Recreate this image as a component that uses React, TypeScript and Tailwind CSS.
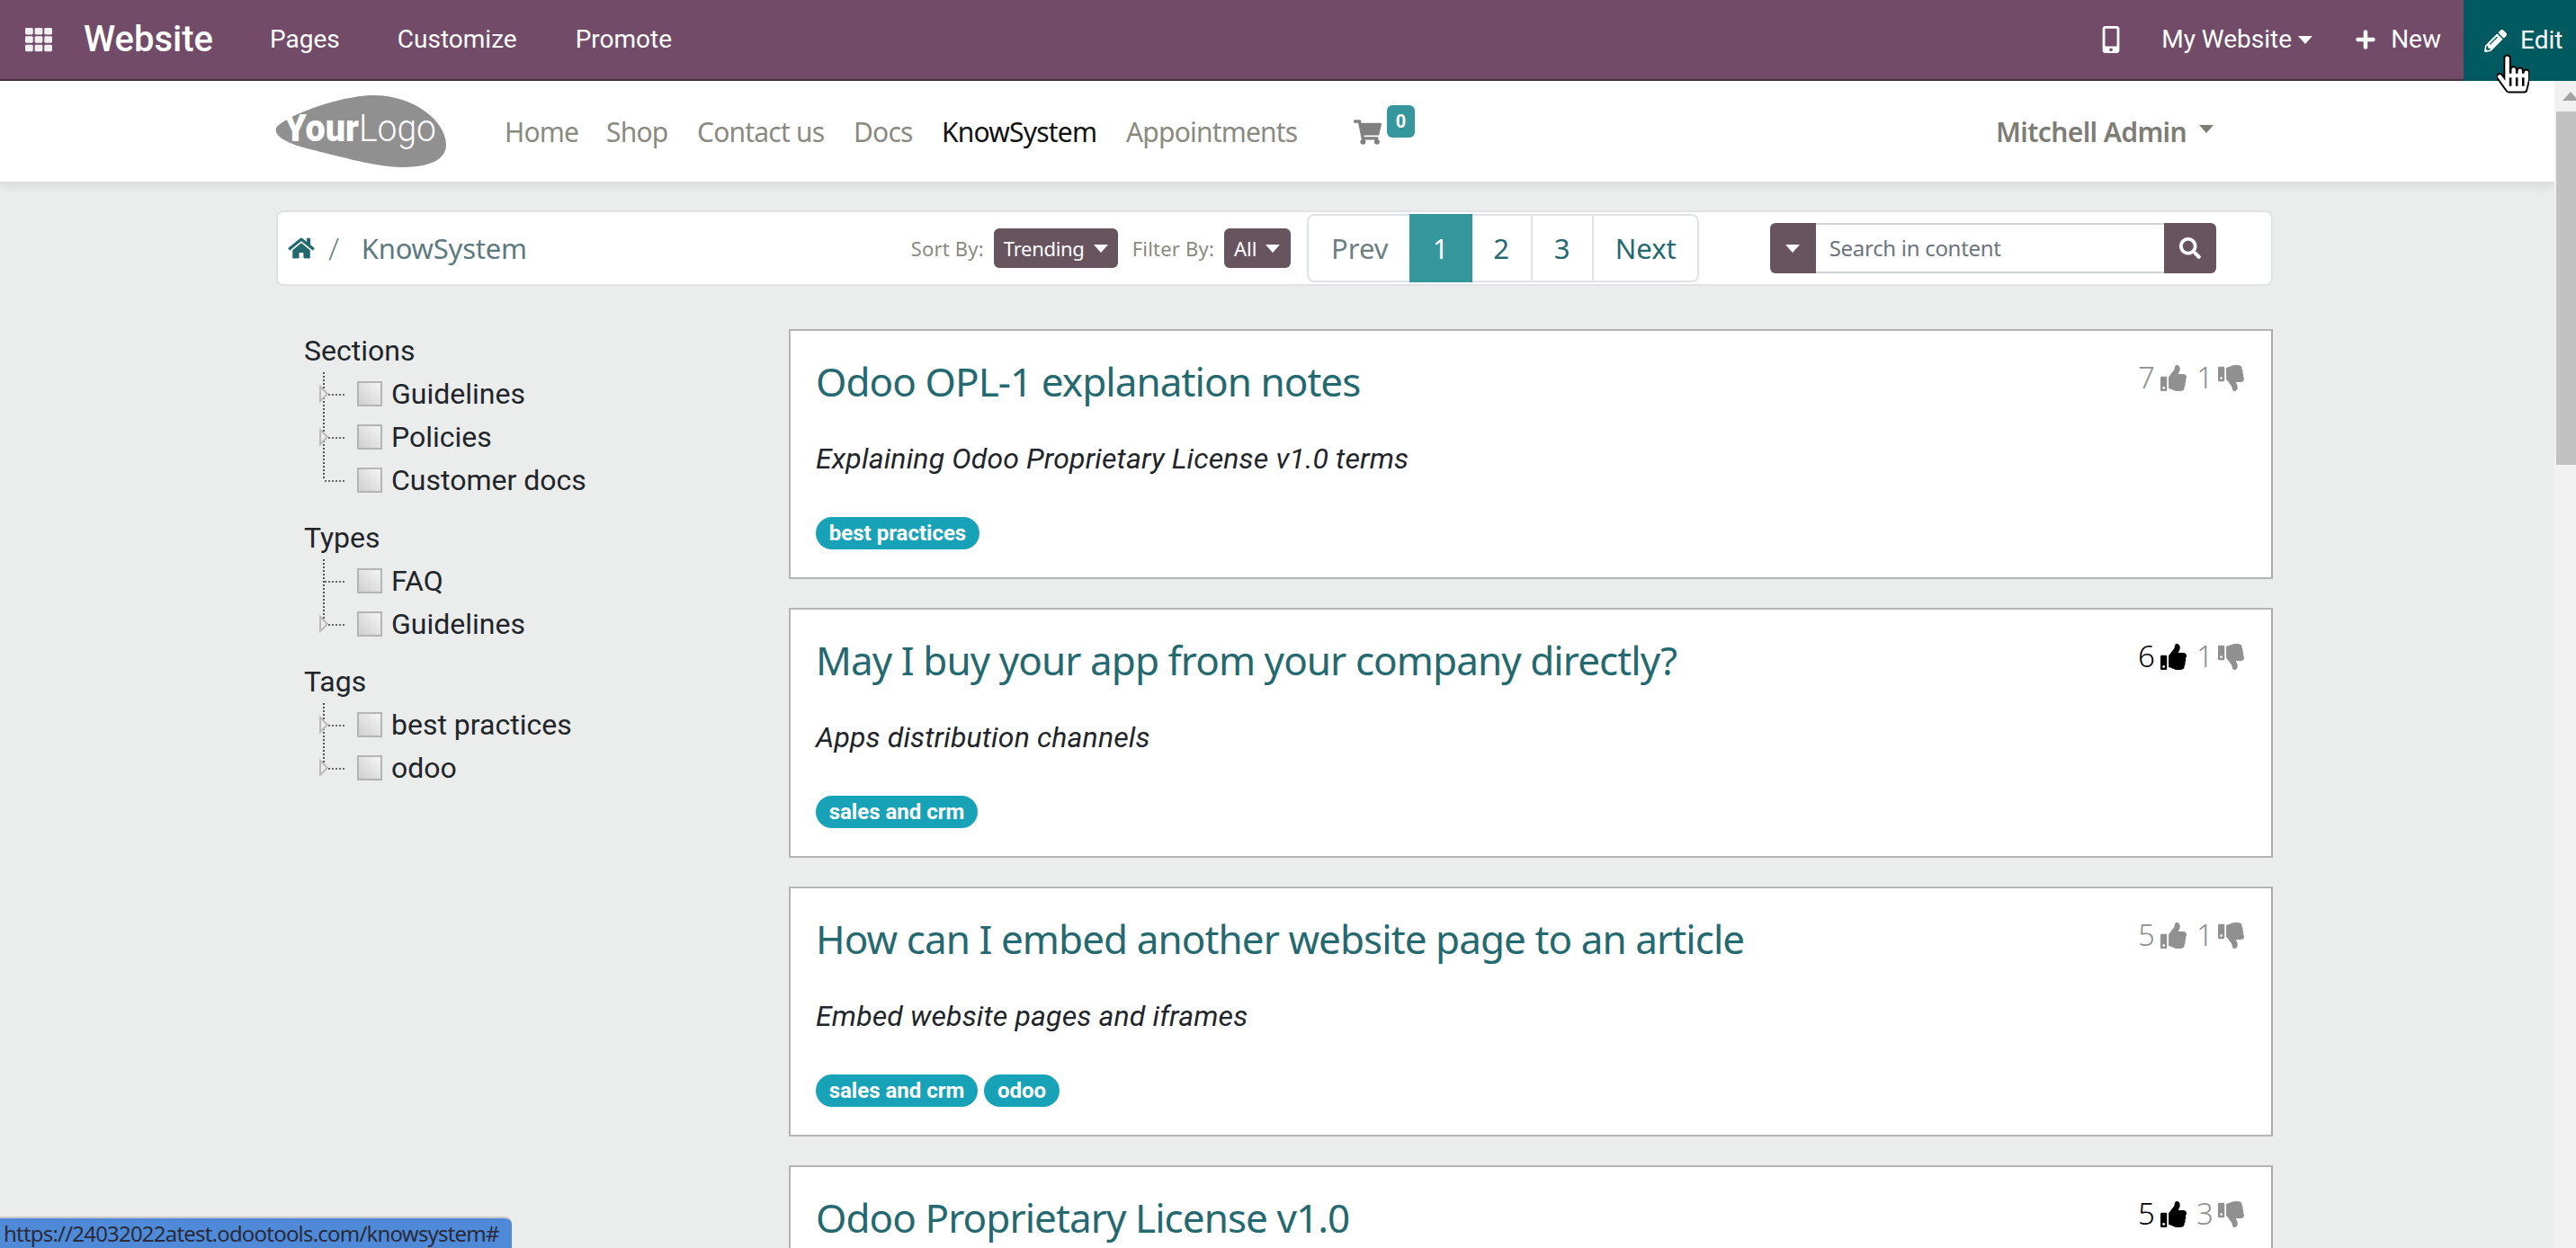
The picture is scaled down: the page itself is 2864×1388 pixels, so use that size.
import { FaTh, FaHome, FaMobileAlt, FaPlus, FaPencilAlt, FaShoppingCart, FaSearch, FaThumbsUp, FaThumbsDown, FaHandPointer } from "react-icons/fa";

const SOURCE = "[font-family:'Noto_Sans',sans-serif]";

type Vote = { up: number; down: number; voted?: boolean };
type Article = { title: string; desc?: string; tags: { label: string; w: string }[]; votes: Vote };

const ARTICLES: Article[] = [
  {
    title: "Odoo OPL-1 explanation notes",
    desc: "Explaining Odoo Proprietary License v1.0 terms",
    tags: [{ label: "best practices", w: "w-[182px]" }],
    votes: { up: 7, down: 1 },
  },
  {
    title: "May I buy your app from your company directly?",
    desc: "Apps distribution channels",
    tags: [{ label: "sales and crm", w: "w-[180px]" }],
    votes: { up: 6, down: 1, voted: true },
  },
  {
    title: "How can I embed another website page to an article",
    desc: "Embed website pages and iframes",
    tags: [
      { label: "sales and crm", w: "w-[180px]" },
      { label: "odoo", w: "w-[84px]" },
    ],
    votes: { up: 5, down: 1 },
  },
  {
    title: "Odoo Proprietary License v1.0",
    tags: [],
    votes: { up: 5, down: 3, voted: true },
  },
];

const TREE = [
  { name: "Sections", items: [["Guidelines", true], ["Policies", true], ["Customer docs", false]] },
  { name: "Types", items: [["FAQ", false], ["Guidelines", true]] },
  { name: "Tags", items: [["best practices", true], ["odoo", true]] },
] as const;

function Caret({ className = "" }: { className?: string }) {
  return <span className={`inline-block border-x-[8px] border-t-[9px] border-x-transparent border-t-current ${className}`} />;
}

function TreeRow({ label, arrow, last }: { label: string; arrow: boolean; last: boolean }) {
  return (
    <div className="flex items-center h-[48px]">
      <svg width="48" height="48" className="ml-[7px] shrink-0">
        <line x1="15" y1="0" x2="15" y2={last ? 24 : 48} stroke="#555" strokeWidth="2" strokeDasharray="2 2" />
        <line x1="16" y1="25" x2="40" y2="25" stroke="#666" strokeWidth="2" strokeDasharray="2 2" />
        {arrow && <path d="M11 16 L19 24 L11 32 Z" fill="#ebecec" stroke="#bbb" strokeWidth="2" />}
      </svg>
      <span className="w-[28px] h-[28px] ml-[4px] shrink-0 border-2 border-[#b4b4b4] bg-gradient-to-tr from-[#cfcfcf] to-[#f4f4f4]" />
      <span className="ml-[10px] text-[32px] leading-none text-[#212529]">{label}</span>
    </div>
  );
}

function Votes({ votes }: { votes: Vote }) {
  const up = votes.voted ? "text-black" : "text-[#909090]";
  return (
    <div className={`flex items-center h-[40px] mt-[8px] ${SOURCE} text-[33px] font-light text-[#909090]`}>
      <span className={`w-[16px] ${up}`}>{votes.up}</span>
      <FaThumbsUp className={`w-[29px] h-[29px] ml-[9px] ${up}`} />
      <span className="w-[12px] ml-[11px]">{votes.down}</span>
      <FaThumbsDown className="w-[29px] h-[29px] ml-[12px]" />
    </div>
  );
}

function ArticleCard({ article }: { article: Article }) {
  return (
    <div className="relative h-[278px] shrink-0 bg-white border-2 border-[#b4b4b4] border-r-[#aaa] pl-[28px] pr-[30px] pt-[24px]">
      <div className="flex items-start justify-between h-[64px]">
        <h3 className={`${SOURCE} text-[44px] leading-[64px] tracking-[-0.92px] font-normal text-[#24696f]`}>{article.title}</h3>
        <Votes votes={article.votes} />
      </div>
      {article.desc && (
        <p className="mt-[34px] h-[40px] text-[32px] leading-[40px] tracking-[0.15px] italic text-[#212529] [font-family:Roboto,sans-serif]">{article.desc}</p>
      )}
      <div className="flex gap-[7px] mt-[45px]">
        {article.tags.map((t) => (
          <span key={t.label} className={`${t.w} h-[36px] flex items-center justify-center rounded-full bg-[#17a2b8] text-white text-[24px] font-bold leading-none`}>
            {t.label}
          </span>
        ))}
      </div>
    </div>
  );
}

export default function App() {
  return (
    <div className="relative w-[2864px] h-[1388px] overflow-hidden bg-[#ebecec] [font-family:Roboto,sans-serif]">
      {/* Website top bar */}
      <div className="flex items-center h-[90px] bg-[#714b67] border-b-2 border-[#4a3144] text-white">
        <FaTh className="w-[34px] h-[30px] ml-[26px] text-[#f3eef1]" />
        <span className="ml-[33px] text-[40px] font-medium">Website</span>
        <span className="ml-[63px] text-[28px] leading-none">Pages</span>
        <span className="ml-[64px] text-[28px] leading-none">Customize</span>
        <span className="ml-[65px] text-[28px] leading-none">Promote</span>
        <FaMobileAlt className="w-[24px] h-[30px] ml-auto mr-[-4px]" />
        <span className="ml-[48px] mr-[-1px] text-[28px] leading-none">My Website</span>
        <Caret className="ml-[8px]" />
        <FaPlus className="w-[24px] h-[24px] ml-[47px] mr-[-1px]" />
        <span className="ml-[17px] text-[28px] leading-none">New</span>
        <div className="flex items-center h-[90px] ml-[25px] w-[125px] bg-[#005a5f] -mb-[2px]">
          <FaPencilAlt className="w-[25px] h-[25px] ml-[23px]" />
          <span className="ml-[15px] text-[28px] leading-none">Edit</span>
        </div>
      </div>

      <div className="flex h-[1298px]">
        <div className="w-[2840px] shrink-0">
          {/* Site header */}
          <header className="flex items-center h-[112px] pl-[307px] bg-white shadow-[0_4px_12px_rgba(0,0,0,0.1)]">
            <svg width="190" height="80" viewBox="0 0 190 80" className="shrink-0 overflow-visible">
              <path d="M0 37 C 5 25 70 0 108 0 C 155 0 189 30 189 55 C 189 72 170 80 139 80 C 110 80 60 65 30 58 C 10 52 -2 45 0 37 Z" fill="#909090" />
              <text x="9" y="51" fill="#fff" fontFamily="Roboto" fontWeight="900" fontSize="42" textLength="83" lengthAdjust="spacingAndGlyphs">Your</text>
              <text x="92" y="51" fill="#fff" fontFamily="Roboto" fontWeight="300" fontSize="42" textLength="86" lengthAdjust="spacingAndGlyphs">Logo</text>
            </svg>
            <nav className={`flex items-center ml-[64px] ${SOURCE} text-[30px] tracking-[-0.8px] text-[#8a8a80]`}>
              <span className="w-[113px]">Home</span>
              <span className="w-[101px]">Shop</span>
              <span className="w-[174px]">Contact us</span>
              <span className="w-[98px]">Docs</span>
              <span className="w-[205px] text-[#111]">KnowSystem</span>
              <span className="w-[253px]">Appointments</span>
            </nav>
            <FaShoppingCart className="w-[31px] h-[28px] text-[#808080] mt-[2px]" />
            <span className="ml-[6px] -mt-[22px] w-[31px] h-[36px] rounded-[6px] bg-[#35979c] text-white text-[20px] font-bold flex items-center justify-center">0</span>
            <span className={`ml-[646px] ${SOURCE} text-[30px] font-semibold tracking-[-0.6px] text-[#7d7d75]`}>Mitchell Admin</span>
            <Caret className="ml-[14px] text-[#7d7d75] -mt-[6px]" />
          </header>

          <div className="pl-[307px] pr-[313px]">
            {/* Toolbar */}
            <div className="flex items-center h-[84px] mt-[32px] bg-white border-2 border-[#e0e3e5] rounded-[8px] pl-[11px]">
              <FaHome className="w-[30px] h-[26px] text-[#24696f] shrink-0" />
              <span className="ml-[15px] text-[32px] font-light text-[#5c7a80]">/</span>
              <span className={`ml-[24px] w-[611px] ${SOURCE} text-[31px] tracking-[-0.2px] text-[#5c7a80]`}>KnowSystem</span>
              <span className={`w-[92px] ${SOURCE} text-[22px] tracking-[0.2px] text-[#8a8a80]`}>Sort By:</span>
              <span className={`flex items-center justify-center gap-[10px] w-[138px] h-[44px] rounded-[6px] bg-[#68545f] text-white ${SOURCE} text-[22px] tracking-[-0.3px]`}>
                Trending <Caret className="border-x-[6px] border-t-[7px]" />
              </span>
              <span className={`ml-[16px] w-[102px] ${SOURCE} text-[22px] tracking-[0.2px] text-[#8a8a80]`}>Filter By:</span>
              <span className={`flex items-center justify-center gap-[10px] w-[74px] h-[44px] rounded-[6px] bg-[#68545f] text-white ${SOURCE} text-[22px]`}>
                All <Caret className="border-x-[6px] border-t-[7px]" />
              </span>
              <div className={`flex ml-[18px] h-[76px] border-2 border-[#e0e3e5] rounded-[8px] ${SOURCE} text-[31px] text-[#24696f] -my-[2px]`}>
                <span className="w-[112px] flex items-center justify-center pl-[2px] text-[#6d7f83]">Prev</span>
                <span className="w-[70px] -my-[2px] flex items-center justify-center bg-[#35979c] text-white">1</span>
                <span className="w-[67px] flex items-center justify-center border-r-2 border-[#e0e3e5]">2</span>
                <span className="w-[68px] flex items-center justify-center border-r-2 border-[#e0e3e5]">3</span>
                <span className="w-[115px] flex items-center justify-center pl-[1px]">Next</span>
              </div>
              <div className="flex ml-[79px] h-[56px] w-[496px]">
                <span className="w-[51px] flex items-center justify-center rounded-l-[6px] bg-[#68545f] text-white">
                  <Caret className="border-x-[7px] border-t-[8px]" />
                </span>
                <span className={`flex-1 flex items-center pl-[15px] border-y-2 border-[#ced4da] bg-white ${SOURCE} text-[24px] tracking-[-0.3px] text-[#6c757d]`}>Search in content</span>
                <span className="w-[58px] flex items-center justify-center rounded-r-[6px] bg-[#68545f] text-white">
                  <FaSearch className="w-[24px] h-[24px]" />
                </span>
              </div>
            </div>

            <div className="flex mt-[48px]">
              {/* Filter trees */}
              <aside className="w-[570px] shrink-0 pl-[31px] text-[#212529]">
                {TREE.map((group, i) => (
                  <div key={group.name} className={i === 0 ? "mt-0" : "mt-[16px]"}>
                    <div className="h-[48px] flex items-center text-[32px] leading-none">{group.name}</div>
                    {group.items.map(([label, arrow], j) => (
                      <TreeRow key={label} label={label} arrow={arrow} last={j === group.items.length - 1} />
                    ))}
                  </div>
                ))}
              </aside>

              {/* Articles */}
              <main className="flex-1 flex flex-col gap-[32px]">
                {ARTICLES.map((a) => (
                  <ArticleCard key={a.title} article={a} />
                ))}
              </main>
            </div>
          </div>
        </div>

        {/* Scrollbar */}
        <div className="w-[24px] shrink-0 bg-[#f1f1f1] flex flex-col items-end">
          <div className="h-[34px] w-full flex items-center justify-end">
            <span className="border-x-[9px] border-b-[10px] border-x-transparent border-b-[#a3a3a3] -mr-[3px]" />
          </div>
          <div className="w-[22px] h-[393px] bg-[#c1c1c1]" />
        </div>
      </div>

      {/* Browser status link */}
      <div className="absolute left-0 bottom-0 w-[569px] h-[35px] bg-[#4e8ad8] border-t-2 border-[#c9c9c9] rounded-tr-[8px] pl-[4px] flex items-center text-[24px] leading-none text-[#2a2a3a] [font-family:'Noto_Sans',sans-serif] tracking-[-0.8px]">
        https://24032022atest.odootools.com/knowsystem#
      </div>

      {/* Mouse cursor */}
      <FaHandPointer className="absolute left-[2776px] top-[58px] w-[36px] h-[48px] text-white" stroke="#000" strokeWidth="24" />
    </div>
  );
}
